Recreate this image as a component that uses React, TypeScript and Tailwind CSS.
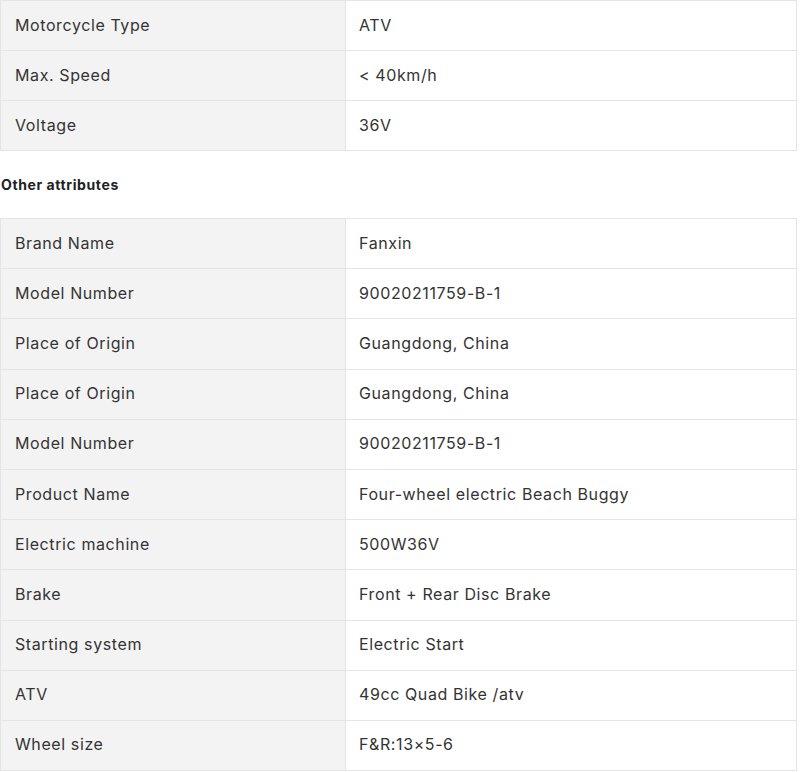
import React from 'react';

interface IAttributeRow {
  label: string;
  value: string;
}

const keyAttributes: IAttributeRow[] = [
  { label: 'Motorcycle Type', value: 'ATV' },
  { label: 'Max. Speed', value: '< 40km/h' },
  { label: 'Voltage', value: '36V' }
];

const otherAttributes: IAttributeRow[] = [
  { label: 'Brand Name', value: 'Fanxin' },
  { label: 'Model Number', value: '90020211759-B-1' },
  { label: 'Place of Origin', value: 'Guangdong, China' },
  { label: 'Place of Origin', value: 'Guangdong, China' },
  { label: 'Model Number', value: '90020211759-B-1' },
  { label: 'Product Name', value: 'Four-wheel electric Beach Buggy' },
  { label: 'Electric machine', value: '500W36V' },
  { label: 'Brake', value: 'Front + Rear Disc Brake' },
  { label: 'Starting system', value: 'Electric Start' },
  { label: 'ATV', value: '49cc Quad Bike /atv' },
  { label: 'Wheel size', value: 'F&R:13×5-6' }
];

const AttributeTable = ({
  rows,
  cellHeight = 'h-[49px]'
}: {
  rows: IAttributeRow[];
  cellHeight?: string;
}): React.ReactElement => {
  return (
    <div className="w-[797px] border border-[#e5e5e5]">
      {rows.map((row, i) => (
        <div
          key={i}
          className={`grid grid-cols-[345px_1fr] ${i > 0 ? 'border-t border-[#e5e5e5]' : ''}`}
        >
          <div className={`${cellHeight} flex items-center pl-[14px] pb-[2px] bg-[#f3f3f3] border-r border-[#e5e5e5]`}>
            {row.label}
          </div>
          <div className={`${cellHeight} flex items-center pl-[13px] pb-[2px] bg-white`}>{row.value}</div>
        </div>
      ))}
    </div>
  );
};

const App = (): React.ReactElement => {
  return (
    <div className="w-[800px] bg-white text-[16px] tracking-[0.6px] text-[#333333] font-['Inter',sans-serif]">
      <AttributeTable rows={keyAttributes} />
      <div className="h-[67px] flex items-center pl-[1px] text-[14px] font-bold text-[#222222]">
        Other attributes
      </div>
      <AttributeTable rows={otherAttributes} cellHeight="h-[49.2px]" />
    </div>
  );
};

export default App;
